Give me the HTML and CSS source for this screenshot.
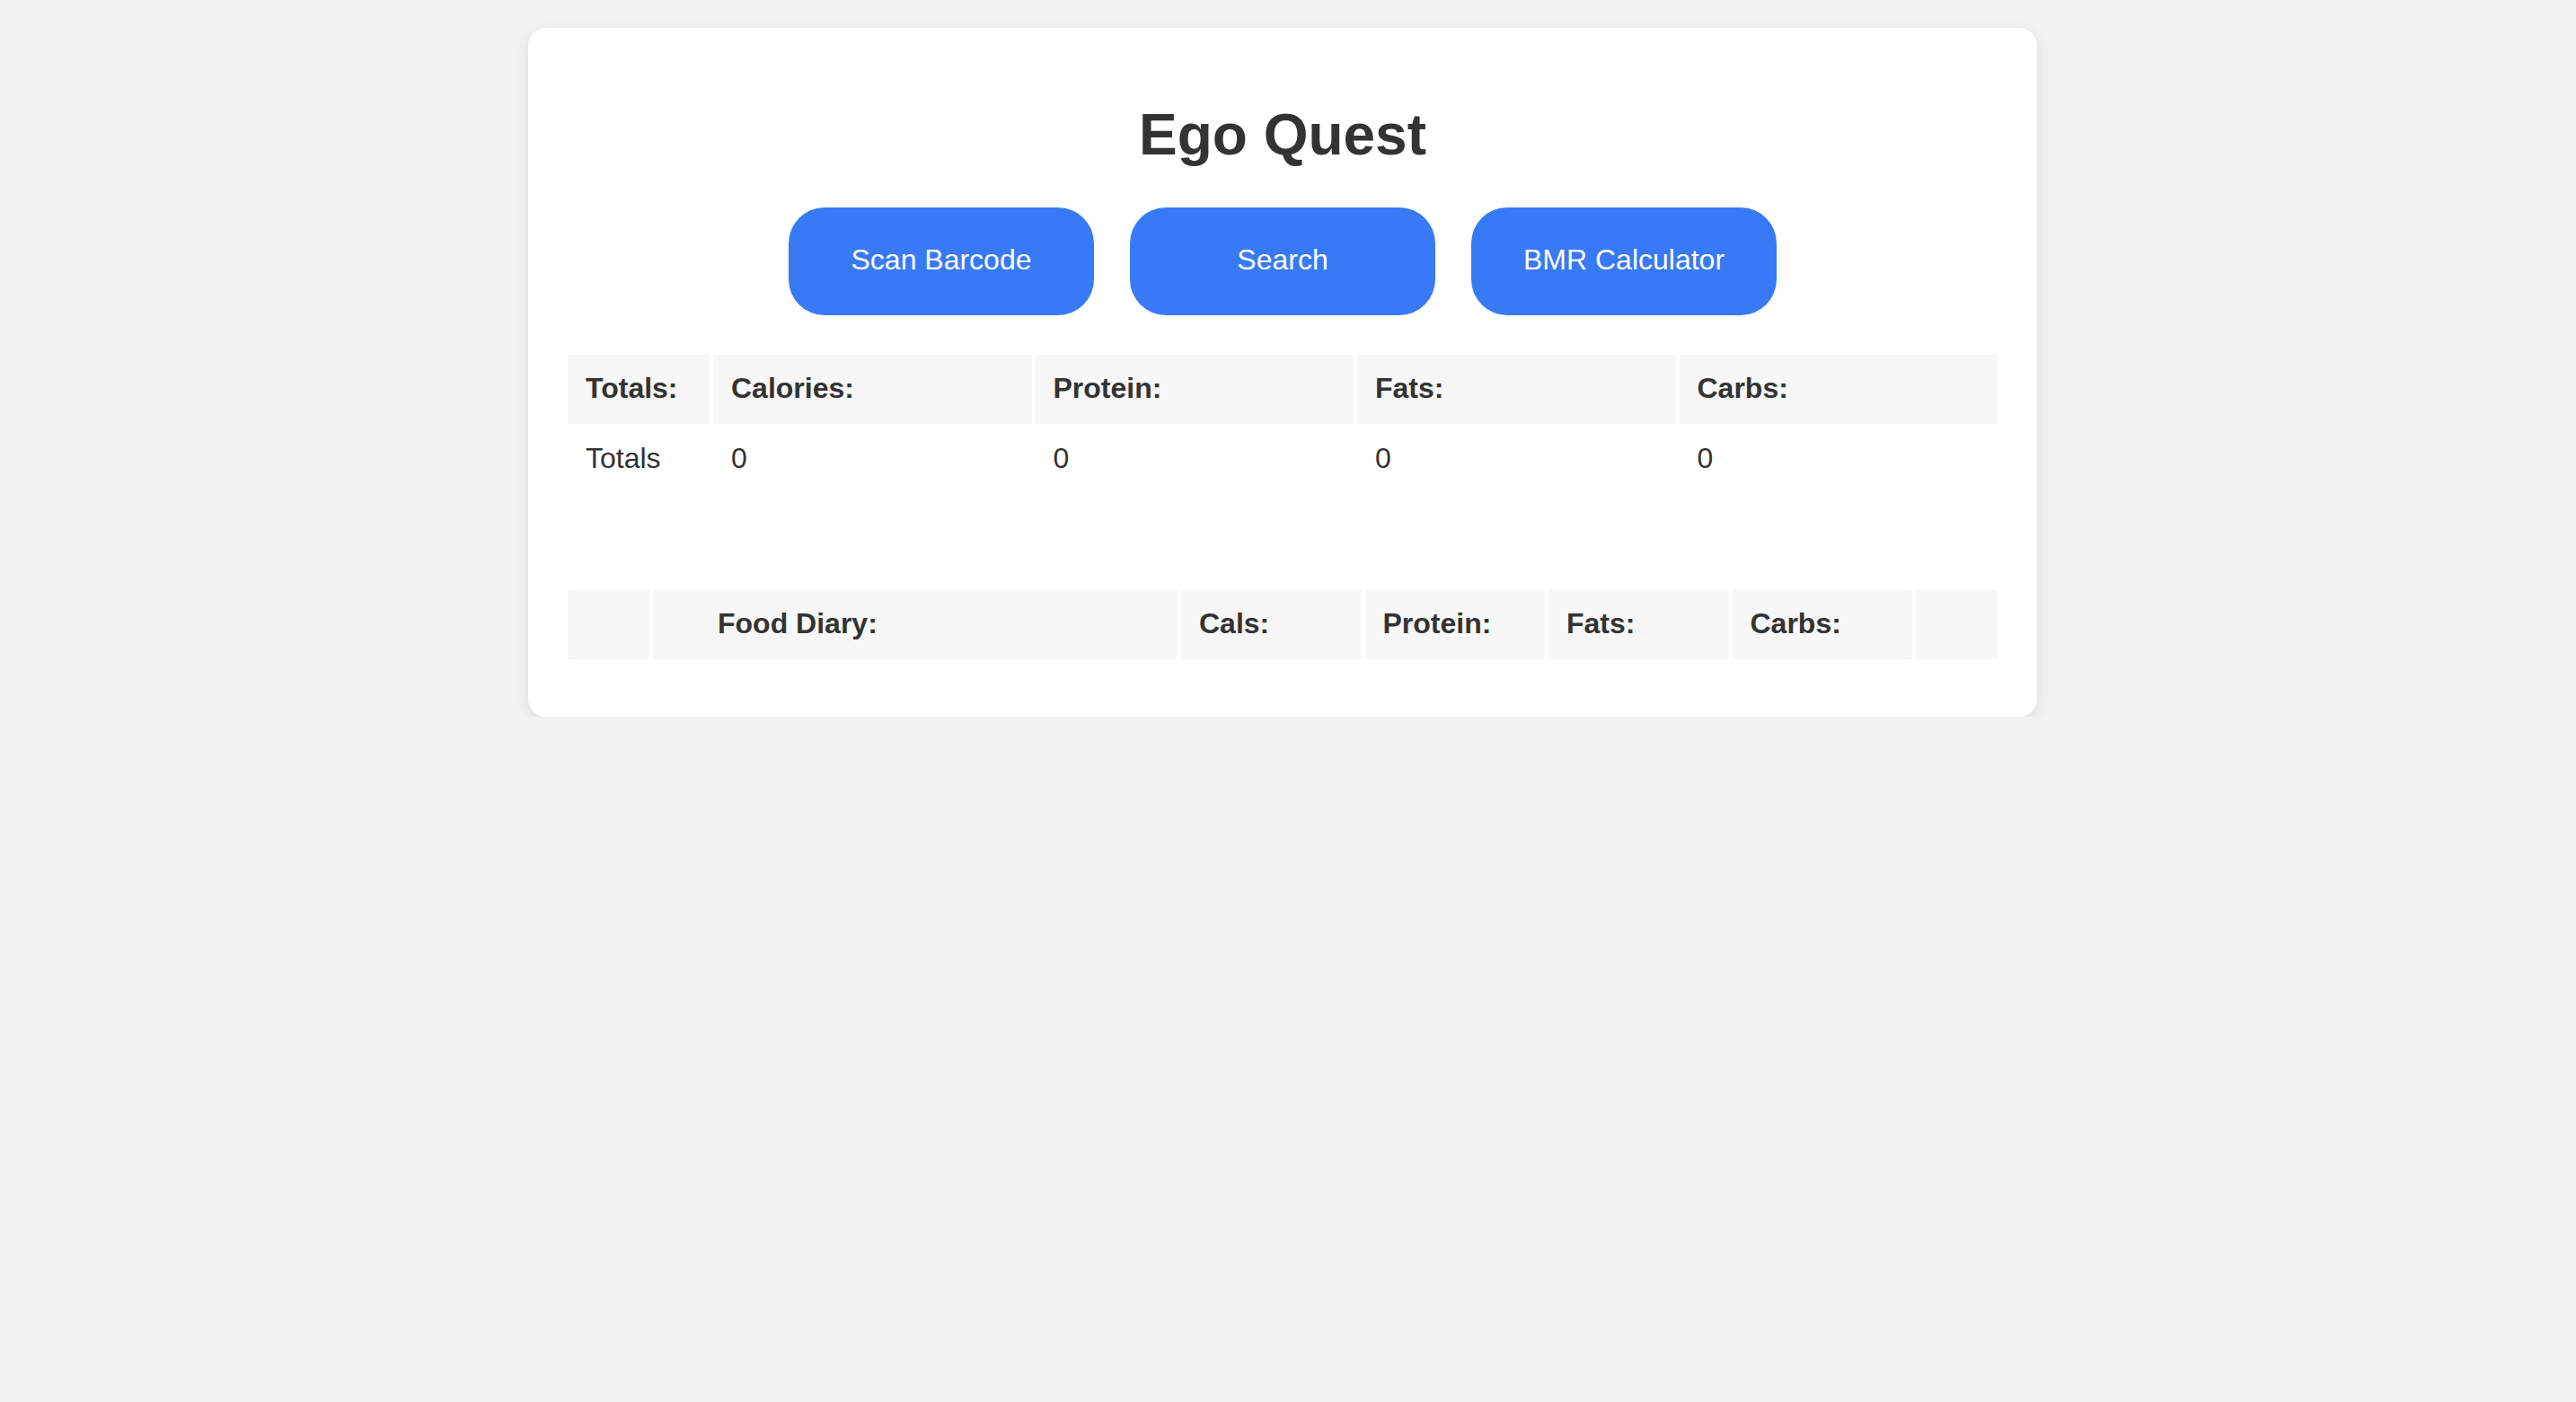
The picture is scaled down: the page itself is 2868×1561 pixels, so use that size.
FILE: index.html
```html
<!DOCTYPE html>
<html lang="en">
<head>
<meta charset="utf-8">
<title>Ego Quest</title>
<link rel="stylesheet" href="styles.css">
</head>
<body>
<div class="card">
  <h1 class="title">Ego Quest</h1>
  <div class="actions">
    <button class="btn">Scan Barcode</button>
    <button class="btn">Search</button>
    <button class="btn">BMR Calculator</button>
  </div>
  <table class="grid totals">
    <thead>
      <tr>
        <th class="col-label">Totals:</th>
        <th>Calories:</th>
        <th>Protein:</th>
        <th>Fats:</th>
        <th>Carbs:</th>
      </tr>
    </thead>
    <tbody>
      <tr>
        <td>Totals</td>
        <td>0</td>
        <td>0</td>
        <td>0</td>
        <td>0</td>
      </tr>
    </tbody>
  </table>
  <table class="grid diary">
    <thead>
      <tr>
        <th class="col-edge"></th>
        <th class="col-food">Food Diary:</th>
        <th>Cals:</th>
        <th>Protein:</th>
        <th>Fats:</th>
        <th>Carbs:</th>
        <th class="col-edge"></th>
      </tr>
    </thead>
  </table>
</div>
</body>
</html>
```

FILE: styles.css
```css
html, body {
  margin: 0;
  padding: 0;
}

body {
  background: #f2f2f2;
  font-family: "Liberation Sans", Arial, sans-serif;
  color: #333;
  padding: 31px 12px 0 0;
}

.card {
  width: 1680px;
  box-sizing: border-box;
  margin: 0 auto;
  background: #fff;
  border-radius: 20px;
  padding: 40px;
  box-shadow: 0 4px 16px rgba(0, 0, 0, 0.09);
}

.title {
  margin: 42px 0 44px;
  text-align: center;
  font-size: 64px;
  font-weight: bold;
  color: #333;
}

.actions {
  display: flex;
  justify-content: center;
  gap: 40px;
  margin-bottom: 40px;
}

.btn {
  width: 340px;
  height: 120px;
  border: none;
  border-radius: 40px;
  background: #387af5;
  color: #fff;
  font-family: "Liberation Sans", Arial, sans-serif;
  font-size: 32px;
  padding: 0 0 4px;
  cursor: pointer;
}

.grid {
  width: 100%;
  border-collapse: separate;
  border-spacing: 4px;
  table-layout: fixed;
}

.grid th,
.grid td {
  padding: 19px 20px 21px;
  font-size: 32px;
  line-height: 37px;
  text-align: left;
  color: #333;
}

.grid td {
  padding-top: 16px;
  padding-bottom: 24px;
}

.grid th {
  background: #f7f7f7;
  font-weight: bold;
}

.totals {
  margin-bottom: 96px;
}

.totals .col-label {
  width: 118px;
}

.diary {
  margin-bottom: 20px;
}

.diary .col-edge {
  width: 51px;
}

.diary .col-food {
  width: 492px;
  padding-left: 72px;
}
```
